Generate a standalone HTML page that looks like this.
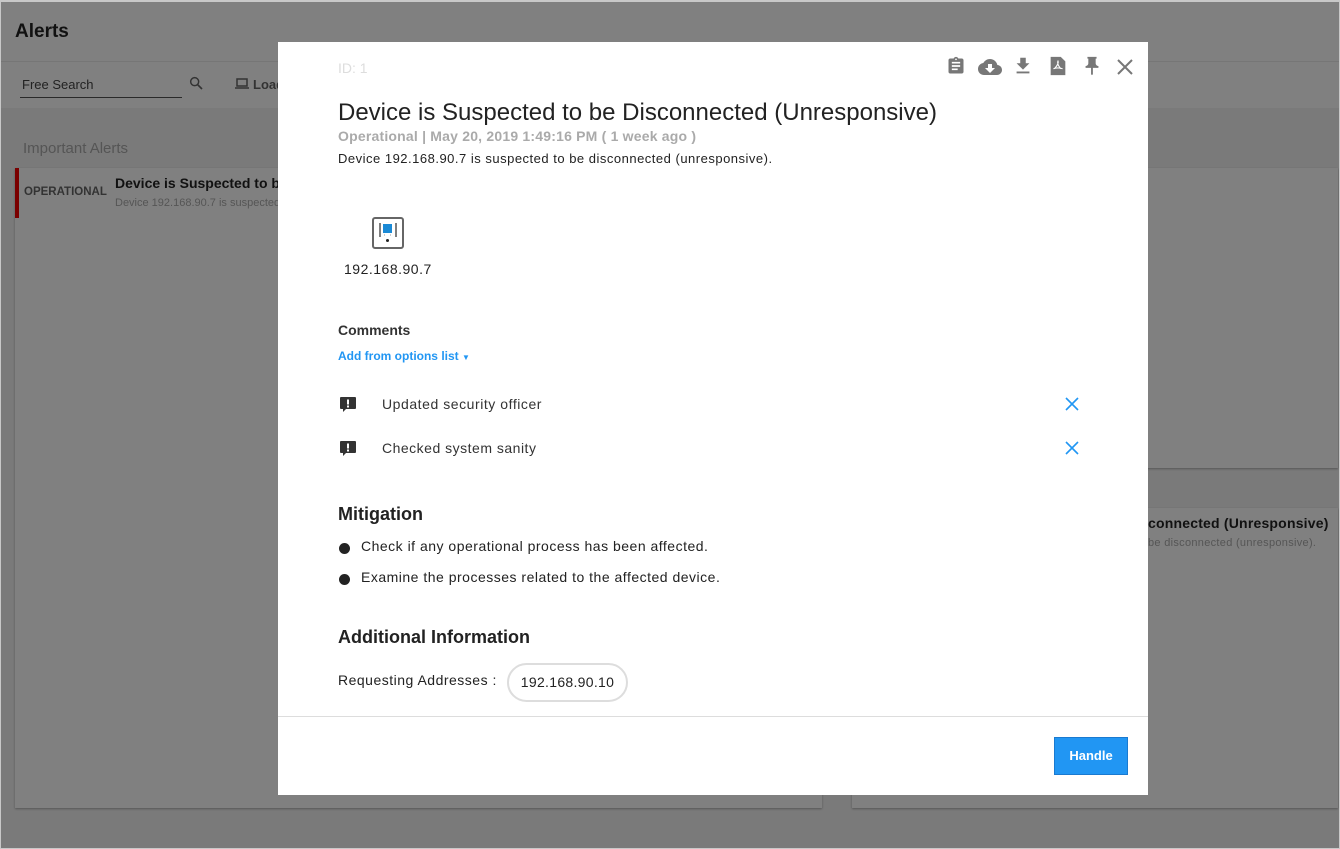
<!DOCTYPE html>
<html><head><style>
*{margin:0;padding:0;box-sizing:border-box}
body{width:1340px;height:849px;overflow:hidden;font-family:"Liberation Sans",Arial,sans-serif;background:#7a7a7a;position:relative}
.a{position:absolute}
.ls{letter-spacing:0.5px}
</style></head><body>
<div class="a" style="left:0;top:0;width:1340px;height:849px;border:1px solid #c8c8c8;border-top:2px solid #c8c8c8;z-index:50;pointer-events:none"></div>
<div class="a" style="left:0;top:0;width:1340px;height:61px;background:#808080"></div>
<div class="a" style="left:0;top:61px;width:1340px;height:1px;background:#767676"></div>
<div class="a" style="left:0;top:62px;width:1340px;height:46px;background:#808080"></div>
<div class="a" style="left:15px;top:21px;font-size:19px;font-weight:bold;color:#111">Alerts</div>
<div class="a" style="left:22px;top:77px;font-size:13px;color:#222">Free Search</div>
<div class="a" style="left:20px;top:97px;width:162px;height:1px;background:#2a2a2a"></div>
<svg class="a" style="left:188px;top:75px" width="16" height="16" viewBox="0 0 24 24"><circle cx="10" cy="10" r="6" fill="none" stroke="#333" stroke-width="2.2"/><path d="M14.5 14.5L21 21" stroke="#333" stroke-width="2.5"/></svg>
<svg class="a" style="left:235px;top:78px" width="14" height="12" viewBox="0 0 14 12"><rect x="2" y="1" width="10" height="7" fill="none" stroke="#333" stroke-width="1.5"/><path d="M0 10h14" stroke="#333" stroke-width="1.5"/></svg>
<div class="a" style="left:253px;top:77px;font-size:13px;font-weight:bold;color:#333">Load</div>
<div class="a" style="left:23px;top:140px;font-size:15px;color:#555">Important Alerts</div>
<div class="a" style="left:15px;top:168px;width:807px;height:640px;background:#808080;box-shadow:0 1px 2px rgba(0,0,0,.3)"></div>
<div class="a" style="left:15px;top:168px;width:4px;height:50px;background:#7a0000"></div>
<div class="a" style="left:24px;top:186px;font-size:11.5px;font-weight:bold;color:#333">OPERATIONAL</div>
<div class="a" style="left:115px;top:175px;font-size:14px;font-weight:bold;color:#111;white-space:nowrap">Device is Suspected to be Disconnected</div>
<div class="a" style="left:115px;top:197px;font-size:11px;color:#555;white-space:nowrap">Device 192.168.90.7 is suspected</div>
<div class="a" style="left:852px;top:168px;width:486px;height:300px;background:#808080;box-shadow:0 1px 2px rgba(0,0,0,.3)"></div>
<div class="a" style="left:852px;top:508px;width:486px;height:300px;background:#808080;box-shadow:0 1px 2px rgba(0,0,0,.3)"></div>
<div class="a" style="left:1140px;top:515px;font-size:14px;font-weight:bold;color:#111;white-space:nowrap;letter-spacing:0.2px">sconnected (Unresponsive)</div>
<div class="a" style="left:1148px;top:537px;font-size:11px;color:#555;white-space:nowrap;letter-spacing:0.3px">be disconnected (unresponsive).</div>

<div class="a" style="left:278px;top:42px;width:870px;height:753px;background:#fff;z-index:10">
<div class="a" style="left:60px;top:18px;font-size:14px;color:#ddd">ID: 1</div>
<svg class="a" style="left:668px;top:13px" width="20" height="22" viewBox="0 0 24 24"><path fill="#777" d="M19 3h-4.2C14.4 1.8 13.3 1 12 1s-2.4.8-2.8 2H5c-1.1 0-2 .9-2 2v14c0 1.1.9 2 2 2h14c1.1 0 2-.9 2-2V5c0-1.1-.9-2-2-2zm-7 0c.55 0 1 .45 1 1s-.45 1-1 1-1-.45-1-1 .45-1 1-1zm2 14H7v-2h7v2zm3-4H7v-2h10v2zm0-4H7V7h10v2z"/></svg>
<svg class="a" style="left:699px;top:13px" width="26" height="24" viewBox="0 0 24 24"><path fill="#777" d="M19.35 10.04C18.67 6.59 15.64 4 12 4 9.110 4 6.6 5.64 5.35 8.04 2.34 8.36 0 10.91 0 14c0 3.31 2.69 6 6 6h13c2.76 0 5-2.24 5-5 0-2.64-2.050-4.78-4.65-4.96zM17 13l-5 5-5-5h3V9h4v4h3z"/></svg>
<svg class="a" style="left:734px;top:13px" width="22" height="22" viewBox="0 0 24 24"><path fill="#777" d="M19 9h-4V3H9v6H5l7 7 7-7zM5 18v2h14v-2H5z"/></svg>
<svg class="a" style="left:769px;top:13px" width="22" height="22" viewBox="0 0 24 24"><path fill="#777" d="M4 2h11l5 5v15H4z"/><path d="M12 6c-1 3 0 5 3 9M12 6c1 3-1 6-4 9M7 15c3-1 7-1 10 0" stroke="#fff" stroke-width="1.2" fill="none"/></svg>
<svg class="a" style="left:803px;top:13px" width="22" height="22" viewBox="0 0 24 24"><path fill="#777" d="M16 9V4h1V2H7v2h1v5c0 1.66-1.34 3-3 3v2h5.97v7l1 1 1-1v-7H19v-2c-1.66 0-3-1.34-3-3z"/></svg>
<svg class="a" style="left:838px;top:16px" width="18" height="18" viewBox="0 0 18 18"><path d="M2 2L16 16M16 2L2 16" stroke="#777" stroke-width="2"/></svg>
<div class="a" style="left:60px;top:57px;font-size:24px;color:#222;white-space:nowrap">Device is Suspected to be Disconnected (Unresponsive)</div>
<div class="a" style="left:60px;top:86px;font-size:14px;color:#aaa;font-weight:bold;white-space:nowrap;letter-spacing:0.2px">Operational | May 20, 2019 1:49:16 PM ( 1 week ago )</div>
<div class="a ls" style="left:60px;top:109px;font-size:13px;color:#222;white-space:nowrap">Device 192.168.90.7 is suspected to be disconnected (unresponsive).</div>
<svg class="a" style="left:94px;top:175px" width="32" height="32" viewBox="0 0 32 32"><rect x="1" y="1" width="30" height="30" rx="2" fill="#fff" stroke="#666" stroke-width="2"/><rect x="11" y="7" width="9" height="9" fill="#1a8ad6"/><path d="M8 6v14M24 6v14" stroke="#555" stroke-width="1.5"/><circle cx="15.5" cy="23.5" r="1.5" fill="#222"/><path d="M12 18h1M18 18h1" stroke="#999"/></svg>
<div class="a ls" style="left:66px;top:219px;font-size:14px;color:#222">192.168.90.7</div>
<div class="a" style="left:60px;top:280px;font-size:14px;font-weight:bold;color:#333">Comments</div>
<div class="a" style="left:60px;top:307px;font-size:12px;font-weight:bold;color:#2196f3">Add from options list <span style="font-size:8px">▼</span></div>
<svg class="a" style="left:61px;top:354px" width="18" height="18" viewBox="0 0 18 18"><path d="M2 1h14a1 1 0 0 1 1 1v10a1 1 0 0 1-1 1H7l-3 3v-3H2a1 1 0 0 1-1-1V2a1 1 0 0 1 1-1z" fill="#333"/><rect x="8" y="3.5" width="2" height="5" fill="#fff"/><rect x="8" y="9.5" width="2" height="2" fill="#fff"/></svg>
<div class="a" style="left:104px;top:354px;font-size:14px;color:#333;letter-spacing:0.55px">Updated security officer</div>
<svg class="a" style="left:787px;top:355px" width="14" height="14" viewBox="0 0 14 14"><path d="M1 1L13 13M13 1L1 13" stroke="#2196f3" stroke-width="1.6"/></svg>
<svg class="a" style="left:61px;top:398px" width="18" height="18" viewBox="0 0 18 18"><path d="M2 1h14a1 1 0 0 1 1 1v10a1 1 0 0 1-1 1H7l-3 3v-3H2a1 1 0 0 1-1-1V2a1 1 0 0 1 1-1z" fill="#333"/><rect x="8" y="3.5" width="2" height="5" fill="#fff"/><rect x="8" y="9.5" width="2" height="2" fill="#fff"/></svg>
<div class="a" style="left:104px;top:398px;font-size:14px;color:#333;letter-spacing:0.5px">Checked system sanity</div>
<svg class="a" style="left:787px;top:399px" width="14" height="14" viewBox="0 0 14 14"><path d="M1 1L13 13M13 1L1 13" stroke="#2196f3" stroke-width="1.6"/></svg>
<div class="a" style="left:60px;top:462px;font-size:18px;font-weight:bold;color:#222">Mitigation</div>
<div class="a" style="left:61px;top:501px;width:11px;height:11px;border-radius:50%;background:#222"></div>
<div class="a ls" style="left:83px;top:496px;font-size:14px;color:#222">Check if any operational process has been affected.</div>
<div class="a" style="left:61px;top:532px;width:11px;height:11px;border-radius:50%;background:#222"></div>
<div class="a ls" style="left:83px;top:527px;font-size:14px;color:#222">Examine the processes related to the affected device.</div>
<div class="a" style="left:60px;top:585px;font-size:18px;font-weight:bold;color:#222">Additional Information</div>
<div class="a ls" style="left:60px;top:630px;font-size:14px;color:#222">Requesting Addresses :</div>
<div class="a" style="left:229px;top:621px;width:121px;height:39px;border:2px solid #ddd;border-radius:20px;font-size:14px;color:#222;text-align:center;line-height:35px;letter-spacing:0.3px">192.168.90.10</div>
<div class="a" style="left:0;top:674px;width:870px;height:1px;background:#ddd"></div>
<div class="a" style="left:776px;top:695px;width:74px;height:38px;background:#2196f3;border:1px solid #1a7ad0;color:#fff;font-size:13px;font-weight:bold;text-align:center;line-height:36px">Handle</div>
</div>
</body></html>
